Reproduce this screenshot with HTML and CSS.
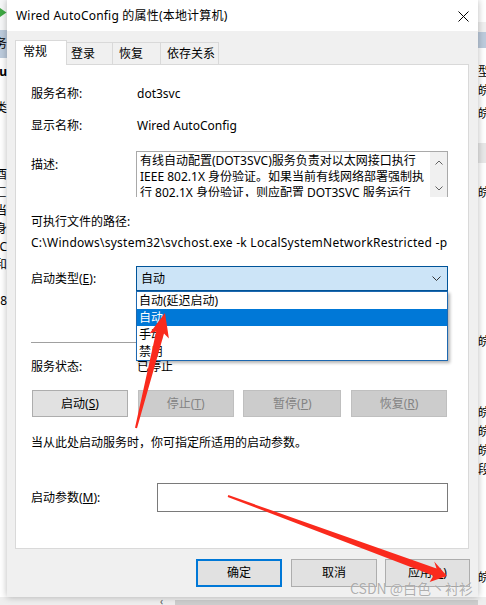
FILE: index.html
```html
<!DOCTYPE html>
<html lang="zh-CN">
<head>
<meta charset="utf-8">
<title>Wired AutoConfig 的属性(本地计算机)</title>
<link rel="stylesheet" href="styles.css">
</head>
<body>
<div class="screen">
  <div class="bg-left">
    <div class="bl-top"><svg class="play" width="7" height="30" viewBox="0 0 7 30"><polygon points="0,8 6.5,12.5 0,17" fill="#3ea843"/></svg></div>
    <div class="bl-band"><span>服务</span></div>
    <div class="frag bold fl-u">Au</div>
    <div class="frag fl-lei">类</div>
    <div class="frag-col fl-desc"><span>酉</span><span>匚</span><span>当</span><span>身</span><span>C</span><span>和</span><span>。</span><span>8</span></div>
  </div>

  <div class="dialog">
    <div class="titlebar">
      <span class="title">Wired AutoConfig 的属性(本地计算机)</span>
      <svg class="close" width="11" height="11" viewBox="0 0 11 11"><path d="M0.5 0.5L10.5 10.5M10.5 0.5L0.5 10.5" stroke="#000" stroke-width="1" fill="none"/></svg>
    </div>
    <div class="dialog-body">
      <div class="tabs">
        <div class="tab selected">常规</div>
        <div class="tab t-login">登录</div>
        <div class="tab t-recover">恢复</div>
        <div class="tab t-deps">依存关系</div>
      </div>
      <div class="panel">
        <div class="row r-name"><div class="label">服务名称:</div><div class="val">dot3svc</div></div>
        <div class="row r-display"><div class="label">显示名称:</div><div class="val">Wired AutoConfig</div></div>
        <div class="row r-desc">
          <div class="label lbl-desc">描述:</div>
          <div class="descbox">
            <div class="desc-text">有线自动配置(DOT3SVC)服务负责对以太网接口执行<br>IEEE 802.1X 身份验证。如果当前有线网络部署强制执<br>行 802.1X 身份验证，则应配置 DOT3SVC 服务运行</div>
            <div class="scrollbar">
              <svg width="8" height="5" viewBox="0 0 8 5"><polyline points="0.5,4.5 4,1 7.5,4.5" fill="none" stroke="#606060" stroke-width="1"/></svg>
              <svg width="8" height="5" viewBox="0 0 8 5"><polyline points="0.5,0.5 4,4 7.5,0.5" fill="none" stroke="#606060" stroke-width="1"/></svg>
            </div>
          </div>
        </div>
        <div class="path-label">可执行文件的路径:</div>
        <div class="path-val">C:\Windows\system32\svchost.exe -k LocalSystemNetworkRestricted -p</div>
        <div class="row r-startup">
          <div class="label lbl-startup">启动类型(<u>E</u>):</div>
          <div class="combo">
            <span class="combo-text">自动</span>
            <svg class="chev" width="9" height="5" viewBox="0 0 9 5"><polyline points="0.5,0.5 4.5,4.5 8.5,0.5" fill="none" stroke="#333" stroke-width="1"/></svg>
            <div class="dropdown">
              <div class="opt">自动(延迟启动)</div>
              <div class="opt active">自动</div>
              <div class="opt">手动</div>
              <div class="opt">禁用</div>
            </div>
          </div>
        </div>
        <div class="sep"></div>
        <div class="row r-status"><div class="label">服务状态:</div><div class="val">已停止</div></div>
        <div class="svc-buttons">
          <div class="btn b-start">启动(<u>S</u>)</div>
          <div class="btn disabled b-stop">停止(<u>T</u>)</div>
          <div class="btn disabled b-pause">暂停(<u>P</u>)</div>
          <div class="btn disabled b-resume">恢复(<u>R</u>)</div>
        </div>
        <div class="hint">当从此处启动服务时，你可指定所适用的启动参数。</div>
        <div class="row r-params"><div class="label lbl-params">启动参数(<u>M</u>):</div><div class="input"></div></div>
      </div>
      <div class="footer">
        <div class="btn fbtn default">确定</div>
        <div class="btn fbtn b-cancel">取消</div>
        <div class="btn fbtn b-apply">应用(<u>A</u>)</div>
      </div>
    </div>
  </div>

  <div class="bg-right">
    <div class="br-top"></div>
    <div class="br-grey"></div>
    <div class="br-band"></div>
    <div class="frag-r r1">型</div>
    <div class="frag-r r2">皖</div>
    <div class="frag-r r3">皖</div>
    <div class="br-gap"></div>
    <div class="frag-r r4">皖</div>
    <div class="frag-r r5">皖</div>
    <div class="frag-r r6">皖</div>
    <div class="frag-r r7">皖</div>
    <div class="frag-r r7">皖</div>
    <div class="frag-r r7">段</div>
    <div class="frag-r r8">皖</div>
  </div>
</div>
<div class="bg-bottom">
  <div class="bb-left"></div>
  <div class="bb-arrow">‹</div>
  <div class="bb-bar"></div>
</div>

<svg class="arrows" width="486" height="605" viewBox="0 0 486 605">
  <polygon fill="#fa2a1d" points="165,313 168.9,338.5 164,333.4 137,428.2 135,427.8 156.2,331.4 149.5,333.5"/>
  <polygon fill="#fa2a1d" points="447,576 429.6,582 433.5,575.8 227.7,496.9 228.3,495.1 436.5,568.5 434.2,561.5"/>
</svg>
<div class="watermark">CSDN @白色丶衬衫</div>
</body>
</html>
```

FILE: styles.css
```css
* { box-sizing: border-box; }
html, body { margin: 0; padding: 0; }
body {
  width: 486px;
  height: 605px;
  overflow: hidden;
  background: #eeeeee;
  font-family: "Noto Sans", "Noto Sans CJK SC", sans-serif;
  font-size: 12px;
  line-height: 16px;
  color: #000;
  position: relative;
}
u { text-decoration: underline; text-underline-offset: 1px; }

.screen { display: flex; height: 597px; }

/* background window, left strip */
.bg-left {
  width: 7px; flex: none; background: #fff; overflow: hidden;
  display: flex; flex-direction: column; align-items: flex-end;
}
.bl-top { align-self: stretch; height: 30px; background: #f6f7f8; }
.play { display: block; }
.bl-band {
  align-self: stretch; height: 28px; background: #bccbdc;
  display: flex; justify-content: flex-end; align-items: center; white-space: nowrap;
}
.frag { white-space: nowrap; line-height: 18px; }
.bold { font-weight: bold; }
.fl-u { margin-top: 5px; }
.fl-lei { margin-top: 18px; }
.frag-col {
  display: flex; flex-direction: column; align-items: flex-end;
  margin-top: 49px; line-height: 18px; white-space: nowrap;
}

/* background window, right strip */
.bg-right {
  width: 8px; flex: none; background: #fff; overflow: hidden;
  display: flex; flex-direction: column;
}
.br-top { height: 22px; flex: none; }
.br-grey { height: 10px; background: #f0f0f0; flex: none; }
.br-band { height: 16px; background: #bccbdc; flex: none; }
.br-gap { height: 20px; background: #e8e8e8; flex: none; margin-top: 20px; }
.frag-r { white-space: nowrap; line-height: 18px; flex: none; }
.r1 { margin-top: 15px; }
.r2 { margin-top: 1px; }
.r3 { margin-top: 5px; }
.r4 { margin-top: 21px; }
.r5 { margin-top: 131px; }
.r6 { margin-top: 53px; }
.r7 { margin-top: 1px; }
.r8 { margin-top: 90px; }

/* bottom strip */
.bg-bottom { height: 8px; display: flex; }
.bb-left { width: 160px; }
.bb-arrow { width: 15px; font-size: 10px; line-height: 8px; color: #555; }
.bb-bar { width: 303px; height: 5px; margin-top: 3px; background: #cdcdcd; }

/* dialog */
.dialog {
  width: 471px; flex: none;
  display: flex; flex-direction: column;
  background: #f0f0f0;
  box-shadow: 0 0 7px rgba(0, 0, 0, 0.28);
  position: relative; z-index: 1;
}
.titlebar {
  height: 31px; background: #fff;
  display: flex; align-items: center; justify-content: space-between;
  padding: 1px 9px 0 9px;
}
.title { white-space: nowrap; letter-spacing: 0.2px; }
.close { display: block; }

.dialog-body { padding: 9px 9px 0 8px; }

.tabs { display: flex; align-items: flex-end; height: 24px; }
.tab {
  height: 22px; border: 1px solid #d9d9d9; border-bottom: none;
  background: #f0f0f0; line-height: 21px; margin-left: -1px; white-space: nowrap;
}
.tab.selected {
  width: 52px; height: 25px; margin-left: 0; margin-bottom: -1px;
  background: #fff; padding-left: 7px; line-height: 22px;
  position: relative; z-index: 1;
}
.t-login { width: 47px; padding-left: 4px; }
.t-recover { width: 49px; padding-left: 6px; }
.t-deps { width: 59px; padding-left: 6px; }

.panel {
  height: 485px; background: #fff; border: 1px solid #d9d9d9;
  padding: 21px 20px 0 15px;
}
.row { display: flex; }
.label { width: 105px; flex: none; white-space: nowrap; }
.val { padding-left: 1px; white-space: nowrap; }
.r-display { margin-top: 16px; }
.r-desc { margin-top: 17px; }
.lbl-desc { margin-top: 6px; }
.descbox {
  width: 312px; height: 46px; display: flex;
  border: 1px solid #a9a9a9; border-bottom: none; overflow: hidden;
}
.desc-text {
  flex: 1; padding: 1px 0 0 3px; white-space: nowrap; overflow: hidden;
}
.scrollbar {
  width: 17px; flex: none; background: #f0f0f0;
  display: flex; flex-direction: column; align-items: center;
  padding-top: 8px; gap: 21px;
}
.scrollbar svg { display: block; }

.path-label { margin-top: 17px; white-space: nowrap; }
.path-val { margin-top: 5px; white-space: nowrap; letter-spacing: 0.25px; }

.r-startup { margin-top: 15px; }
.lbl-startup { margin-top: 5px; }
.combo {
  width: 312px; height: 25px; position: relative;
  background: #cce4f7; border: 1px solid #005499;
  display: flex; align-items: center; justify-content: space-between;
  padding: 0 6px 0 4px;
}
.chev { display: block; }
.dropdown {
  position: absolute; left: -1px; top: 24px; width: 312px; height: 70px;
  background: #fff; border: 1px solid #1d68b0;
  box-shadow: 2px 2px 3px rgba(0, 0, 0, 0.3);
  z-index: 2;
}
.opt { height: 17px; line-height: 17px; padding-left: 2px; white-space: nowrap; }
.opt.active { background: #0078d7; color: #fff; }

.sep { height: 1px; background: #a0a0a0; margin-top: 51px; }
.r-status { margin-top: 16px; }

.svc-buttons {
  margin-top: 15px; display: flex; justify-content: space-between;
  padding: 0 1px;
}
.btn {
  height: 27px; border: 1px solid #adadad; background: #e1e1e1;
  display: flex; align-items: center; justify-content: center; white-space: nowrap;
}
.btn.disabled { background: #cccccc; border-color: #bfbfbf; color: #838383; }
.b-start, .b-stop, .b-resume { width: 96px; }
.b-pause { width: 98px; }

.hint { margin-top: 18px; white-space: nowrap; }
.r-params { margin-top: 32px; }
.lbl-params { width: 126px; margin-top: 7px; }
.input { width: 291px; height: 29px; border: 1px solid #7a7a7a; background: #fff; }

.footer {
  display: flex; justify-content: flex-end;
  margin: 10px -1px 0 0;
}
.fbtn { height: 28px; width: 86px; }
.fbtn.default { border: 2px solid #0078d7; }
.b-cancel { margin-left: 9px; }
.b-apply { width: 85px; margin-left: 8px; }

/* overlays */
.arrows {
  position: absolute; left: 0; top: 0; z-index: 10; pointer-events: none;
}
.watermark {
  position: absolute; left: 350px; top: 580px; z-index: 11;
  font-family: "Noto Sans CJK SC", sans-serif; font-size: 14px; line-height: 16px;
  color: rgba(110, 110, 110, 0.55); white-space: nowrap;
  text-shadow: 0 0 1px rgba(255, 255, 255, 0.8);
}
```
